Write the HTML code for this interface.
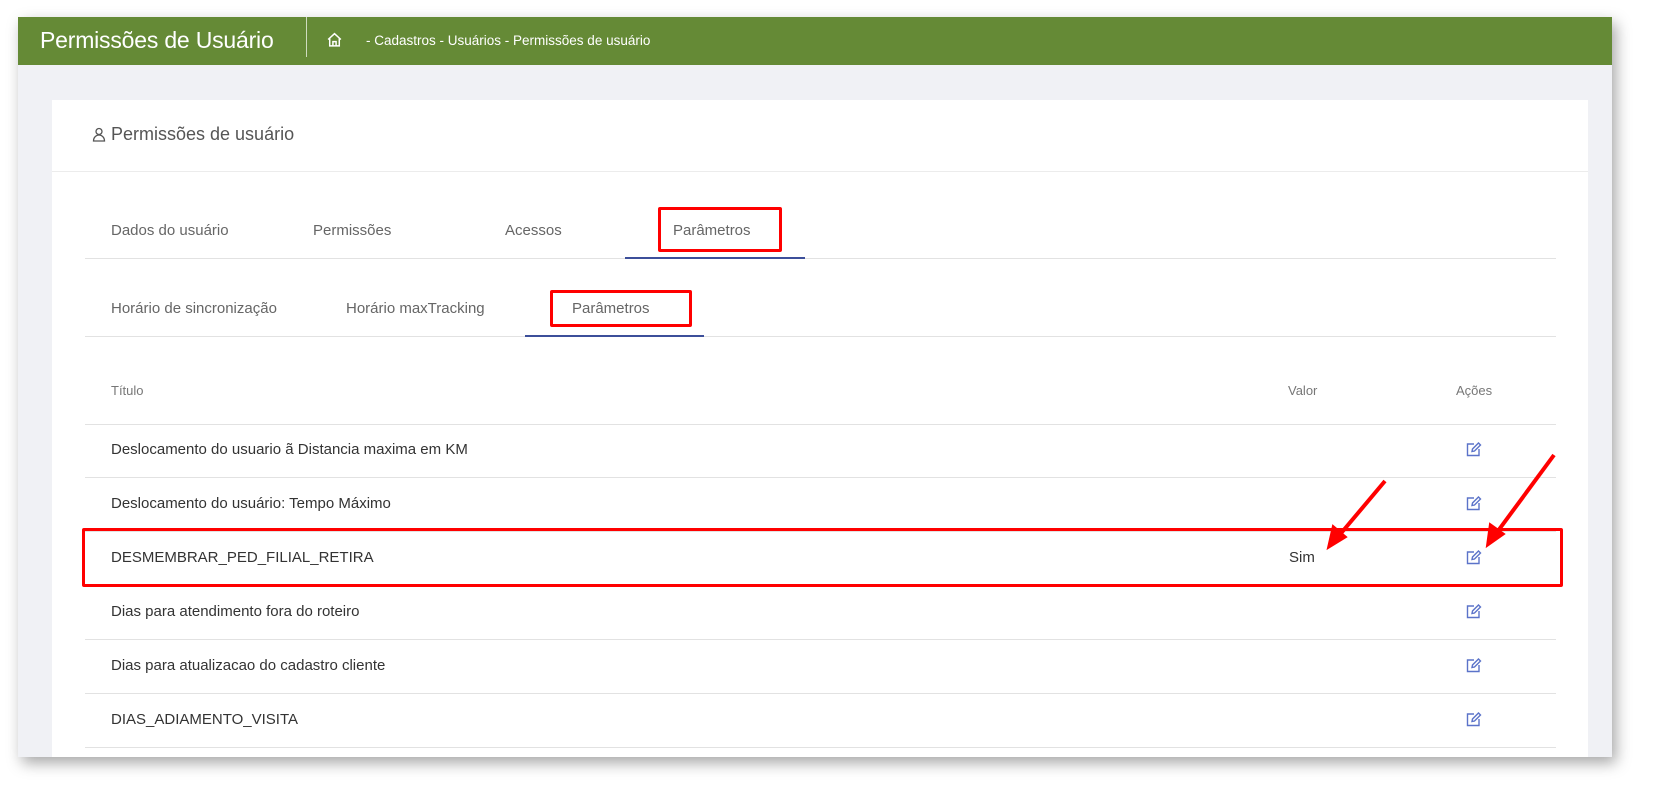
<!DOCTYPE html>
<html><head><meta charset="utf-8"><style>
*{margin:0;padding:0;box-sizing:border-box}
body{width:1661px;height:806px;background:#fff;font-family:"Liberation Sans",sans-serif;position:relative;overflow:hidden}
.page{position:absolute;left:18px;top:17px;width:1594px;height:740px;background:#f0f1f5;box-shadow:4px 6px 14px rgba(0,0,0,.35);overflow:hidden}
.hdr{position:absolute;left:0;top:0;width:100%;height:48px;background:#658a36;color:#fff}
.a{position:absolute;white-space:nowrap}
.card{position:absolute;left:34px;top:83px;width:1536px;height:700px;background:#fff}
.rb{position:absolute;border:3px solid #f00;border-radius:2px}
.t{font-size:15px;color:#333}
.line{position:absolute;height:1px;background:#e2e2e2}
</style></head><body>
<div class="page">
 <div class="hdr">
  <div class="a" style="left:22px;top:10px;font-size:23px;letter-spacing:-0.2px">Permissões de Usuário</div>
  <div class="a" style="left:288px;top:0;width:1px;height:40px;background:#cfdcbf"></div>
  <svg class="a" style="left:308px;top:14px" width="17" height="17" viewBox="0 0 16 16" fill="none" stroke="#fff" stroke-width="1.4"><path d="M2 8L8 2.5 14 8M3.5 7v7h9V7M6.5 14V10h3v4"/></svg>
  <div class="a" style="left:348px;top:16px;font-size:13.5px">- Cadastros - Usuários - Permissões de usuário</div>
 </div>
 <div class="card">
  <svg class="a" style="left:40px;top:27px" width="14" height="15" viewBox="0 0 14 15" fill="none" stroke="#555" stroke-width="1.3"><circle cx="7" cy="4.5" r="3"/><path d="M1.5 14c0-3.5 2.5-6 5.5-6s5.5 2.5 5.5 6z"/></svg>
  <div class="a" style="left:59px;top:24px;font-size:18px;color:#555">Permissões de usuário</div>
  <div class="line" style="left:0;top:71px;width:1536px;background:#ececec"></div>

  <div class="a t" style="left:59px;top:122px;color:#666">Dados do usuário</div>
  <div class="a t" style="left:261px;top:122px;color:#666">Permissões</div>
  <div class="a t" style="left:453px;top:122px;color:#666">Acessos</div>
  <div class="a t" style="left:621px;top:122px;color:#666">Parâmetros</div>
  <div class="line" style="left:33px;top:158px;width:1471px"></div>
  <div class="a" style="left:573px;top:157px;width:180px;height:2px;background:#3c4f9a"></div>
  <div class="rb" style="left:606px;top:107px;width:124px;height:45px"></div>

  <div class="a t" style="left:59px;top:200px;color:#666">Horário de sincronização</div>
  <div class="a t" style="left:294px;top:200px;color:#666">Horário maxTracking</div>
  <div class="a t" style="left:520px;top:200px;color:#666">Parâmetros</div>
  <div class="line" style="left:33px;top:236px;width:1471px"></div>
  <div class="a" style="left:473px;top:235px;width:179px;height:2px;background:#3c4f9a"></div>
  <div class="rb" style="left:498px;top:190px;width:142px;height:37px"></div>

  <div class="a" style="left:59px;top:283px;font-size:13px;color:#777">Título</div>
  <div class="a" style="left:1236px;top:283px;font-size:13px;color:#777">Valor</div>
  <div class="a" style="left:1404px;top:283px;font-size:13px;color:#777">Ações</div>
  <div class="line" style="left:33px;top:324px;width:1471px"></div>

  <div class="a t" style="left:59px;top:341px">Deslocamento do usuario ã Distancia maxima em KM</div>
  <div class="line" style="left:33px;top:377px;width:1471px"></div>
  <div class="a t" style="left:59px;top:395px">Deslocamento do usuário: Tempo Máximo</div>
  <div class="line" style="left:33px;top:431px;width:1471px"></div>
  <div class="a t" style="left:59px;top:449px">DESMEMBRAR_PED_FILIAL_RETIRA</div>
  <div class="a t" style="left:1237px;top:449px">Sim</div>
  <div class="line" style="left:33px;top:485px;width:1471px"></div>
  <div class="a t" style="left:59px;top:503px">Dias para atendimento fora do roteiro</div>
  <div class="line" style="left:33px;top:539px;width:1471px"></div>
  <div class="a t" style="left:59px;top:557px">Dias para atualizacao do cadastro cliente</div>
  <div class="line" style="left:33px;top:593px;width:1471px"></div>
  <div class="a t" style="left:59px;top:611px">DIAS_ADIAMENTO_VISITA</div>
  <div class="line" style="left:33px;top:647px;width:1471px"></div>

  <svg width="0" height="0" style="position:absolute"><defs><g id="ed" fill="none" stroke="#5b73c9" stroke-width="1.4"><path d="M8 2H1.5v11.5H13V7"/><path d="M6 9.5l.5-2.5 6-6 2 2-6 6z"/></g></defs></svg>
  <svg class="a" style="left:1414px;top:342px" width="16" height="16"><use href="#ed"/></svg>
  <svg class="a" style="left:1414px;top:396px" width="16" height="16"><use href="#ed"/></svg>
  <svg class="a" style="left:1414px;top:450px" width="16" height="16"><use href="#ed"/></svg>
  <svg class="a" style="left:1414px;top:504px" width="16" height="16"><use href="#ed"/></svg>
  <svg class="a" style="left:1414px;top:558px" width="16" height="16"><use href="#ed"/></svg>
  <svg class="a" style="left:1414px;top:612px" width="16" height="16"><use href="#ed"/></svg>
 </div>
</div>
<div class="rb" style="left:82px;top:528px;width:1481px;height:59px"></div>
<svg class="a" style="left:0;top:0" width="1661" height="806">
 <g stroke="#f00" stroke-width="4" fill="#f00">
  <line x1="1385" y1="481" x2="1337" y2="538"/>
  <polygon points="1328,548 1333,526 1346,537" stroke-width="2"/>
  <line x1="1554" y1="455" x2="1495" y2="535"/>
  <polygon points="1487,546 1490,524 1504,534" stroke-width="2"/>
 </g>
</svg>
</body></html>
